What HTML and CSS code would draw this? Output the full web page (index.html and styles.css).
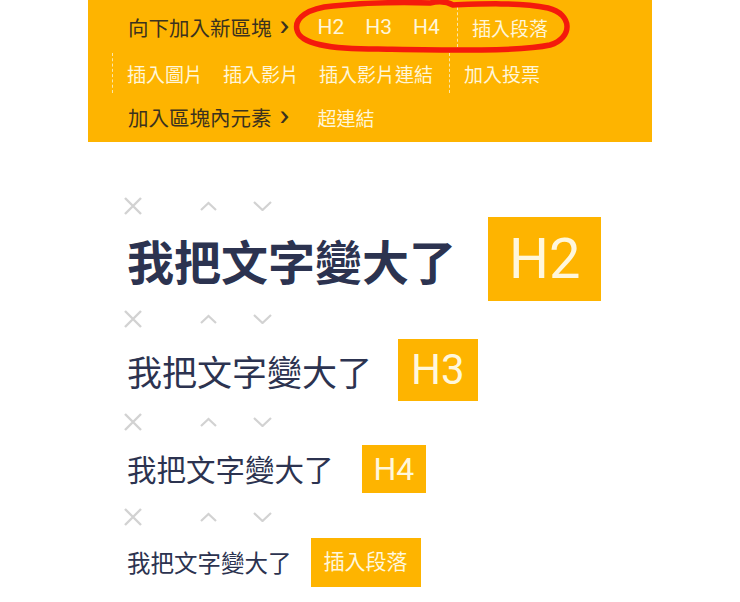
FILE: index.html
```html
<!DOCTYPE html>
<html lang="zh-Hant">
<head>
    <meta charset="UTF-8">
    <meta name="viewport" content="width=device-width, initial-scale=1.0">
    <title>區塊編輯</title>
    <link rel="stylesheet" href="styles.css">
</head>
<body>

    <div class="toolbar">
        <div class="tool-row">
            <span class="tool-label">向下加入新區塊</span>
            <span class="chev">&#x203A;</span>
            <a class="tool-link latin">H2</a>
            <a class="tool-link latin">H3</a>
            <a class="tool-link latin">H4</a>
            <span class="sep"></span>
            <a class="tool-link">插入段落</a>
        </div>
        <div class="tool-row">
            <span class="sep sep-lead"></span>
            <a class="tool-link">插入圖片</a>
            <a class="tool-link">插入影片</a>
            <a class="tool-link">插入影片連結</a>
            <span class="sep"></span>
            <a class="tool-link">加入投票</a>
        </div>
        <div class="tool-row">
            <span class="tool-label">加入區塊內元素</span>
            <span class="chev">&#x203A;</span>
            <a class="tool-link">超連結</a>
        </div>

        <!-- hand drawn mark -->
        <svg class="mark" width="300" height="60" viewBox="0 0 300 60">
            <path d="M45 6 C20 8 6 18 9 30 C12 44 40 49 90 49 C150 50 230 52 262 45 C285 38 285 14 260 8 C230 2 190 4 165 5 C158 1 150 1 142 3 C110 2 75 3 45 6 Z"
                  fill="none" stroke="#f41a0c" stroke-width="5.5" stroke-linecap="round" stroke-linejoin="round"/>
        </svg>
    </div>

    <div class="editor">
        <section class="block block-h2">
            <div class="controls">
                <svg class="ic-x" width="20" height="20" viewBox="0 0 20 20"><path d="M2 2 L18 18 M18 2 L2 18" stroke="#d2d2d2" stroke-width="2.4" fill="none"/></svg>
                <svg class="ic-up" width="17" height="10" viewBox="0 0 17 10"><path d="M1 9 L8.5 2 L16 9" stroke="#d2d2d2" stroke-width="2.2" fill="none"/></svg>
                <svg class="ic-down" width="19" height="10" viewBox="0 0 19 10"><path d="M1 1 L9.5 9 L18 1" stroke="#d2d2d2" stroke-width="2.2" fill="none"/></svg>
            </div>
            <div class="line">
                <h2 class="text">我把文字變大了</h2>
                <span class="tag">H2</span>
            </div>
        </section>

        <section class="block block-h3">
            <div class="controls">
                <svg class="ic-x" width="20" height="20" viewBox="0 0 20 20"><path d="M2 2 L18 18 M18 2 L2 18" stroke="#d2d2d2" stroke-width="2.4" fill="none"/></svg>
                <svg class="ic-up" width="17" height="10" viewBox="0 0 17 10"><path d="M1 9 L8.5 2 L16 9" stroke="#d2d2d2" stroke-width="2.2" fill="none"/></svg>
                <svg class="ic-down" width="19" height="10" viewBox="0 0 19 10"><path d="M1 1 L9.5 9 L18 1" stroke="#d2d2d2" stroke-width="2.2" fill="none"/></svg>
            </div>
            <div class="line">
                <h3 class="text">我把文字變大了</h3>
                <span class="tag">H3</span>
            </div>
        </section>

        <section class="block block-h4">
            <div class="controls">
                <svg class="ic-x" width="20" height="20" viewBox="0 0 20 20"><path d="M2 2 L18 18 M18 2 L2 18" stroke="#d2d2d2" stroke-width="2.4" fill="none"/></svg>
                <svg class="ic-up" width="17" height="10" viewBox="0 0 17 10"><path d="M1 9 L8.5 2 L16 9" stroke="#d2d2d2" stroke-width="2.2" fill="none"/></svg>
                <svg class="ic-down" width="19" height="10" viewBox="0 0 19 10"><path d="M1 1 L9.5 9 L18 1" stroke="#d2d2d2" stroke-width="2.2" fill="none"/></svg>
            </div>
            <div class="line">
                <h4 class="text">我把文字變大了</h4>
                <span class="tag">H4</span>
            </div>
        </section>

        <section class="block block-p">
            <div class="controls">
                <svg class="ic-x" width="20" height="20" viewBox="0 0 20 20"><path d="M2 2 L18 18 M18 2 L2 18" stroke="#d2d2d2" stroke-width="2.4" fill="none"/></svg>
                <svg class="ic-up" width="17" height="10" viewBox="0 0 17 10"><path d="M1 9 L8.5 2 L16 9" stroke="#d2d2d2" stroke-width="2.2" fill="none"/></svg>
                <svg class="ic-down" width="19" height="10" viewBox="0 0 19 10"><path d="M1 1 L9.5 9 L18 1" stroke="#d2d2d2" stroke-width="2.2" fill="none"/></svg>
            </div>
            <div class="line">
                <p class="text">我把文字變大了</p>
                <span class="tag">插入段落</span>
            </div>
        </section>
    </div>

</body>
</html>
```
FILE: styles.css
```css
body {
    margin: 0;
    background-color: #fff;
    font-family: Roboto, "Noto Sans CJK TC", sans-serif;
}
.toolbar {
    position: relative;
    width: 524px;
    height: 138px;
    margin-left: 88px;
    padding: 4px 0 0 40px;
    background-color: #feb400;
}
.tool-row {
    display: flex;
    align-items: center;
    height: 46px;
}
.tool-row:last-of-type {
    height: 42px;
}
.tool-label {
    font-size: 20.5px;
    color: #3b321e;
}
.chev {
    margin: -4px 29px 0 8px;
    font-size: 30px;
    line-height: 1;
    color: #3b321e;
    transform: scaleX(1.2);
}
.tool-link {
    margin-right: 20px;
    font-size: 19px;
    color: #fff6d8;
}
.tool-link.latin {
    margin-right: 21px;
    font-size: 21px;
}
.sep {
    height: 40px;
    margin: 0 14px 0 -4px;
    border-left: 1.5px dashed #fbe6a8;
}
.sep-lead {
    margin-left: -16px;
}
.mark {
    position: absolute;
    left: 200px;
    top: 0;
}
.editor {
    padding: 52px 0 0 123px;
}
.controls {
    display: flex;
    align-items: center;
    height: 24px;
}
.ic-up {
    margin-left: 57px;
}
.ic-down {
    margin-left: 36px;
}
.line {
    display: flex;
    align-items: center;
    padding-left: 4px;
}
.text {
    margin: 0;
    color: #2c3350;
    font-family: "Noto Sans CJK TC", sans-serif;
    font-weight: 400;
    line-height: 1;
}
.tag {
    background-color: #feb400;
    color: #fff7dc;
    line-height: 1;
}
.block-h2 .line { margin-top: -1px; }
.block-h2 .text { font-size: 47px; font-weight: 700; }
.block-h2 .tag { margin-left: 32px; padding: 14px 21px; font-size: 56px; }

.block-h3 { margin-top: 6px; }
.block-h3 .line { margin-top: 8px; }
.block-h3 .text { font-size: 35px; }
.block-h3 .tag { margin-left: 26px; padding: 10px 13px; font-size: 42px; }

.block-h4 { margin-top: 9px; }
.block-h4 .line { margin-top: 11px; }
.block-h4 .text { font-size: 29.5px; }
.block-h4 .tag { margin-left: 28px; padding: 8px 12px; font-size: 32px; }

.block-p { margin-top: 12px; }
.block-p .line { margin-top: 9px; }
.block-p .text { font-size: 23.5px; }
.block-p .tag { margin-left: 19px; padding: 14px 13px; font-size: 21px; }
```
